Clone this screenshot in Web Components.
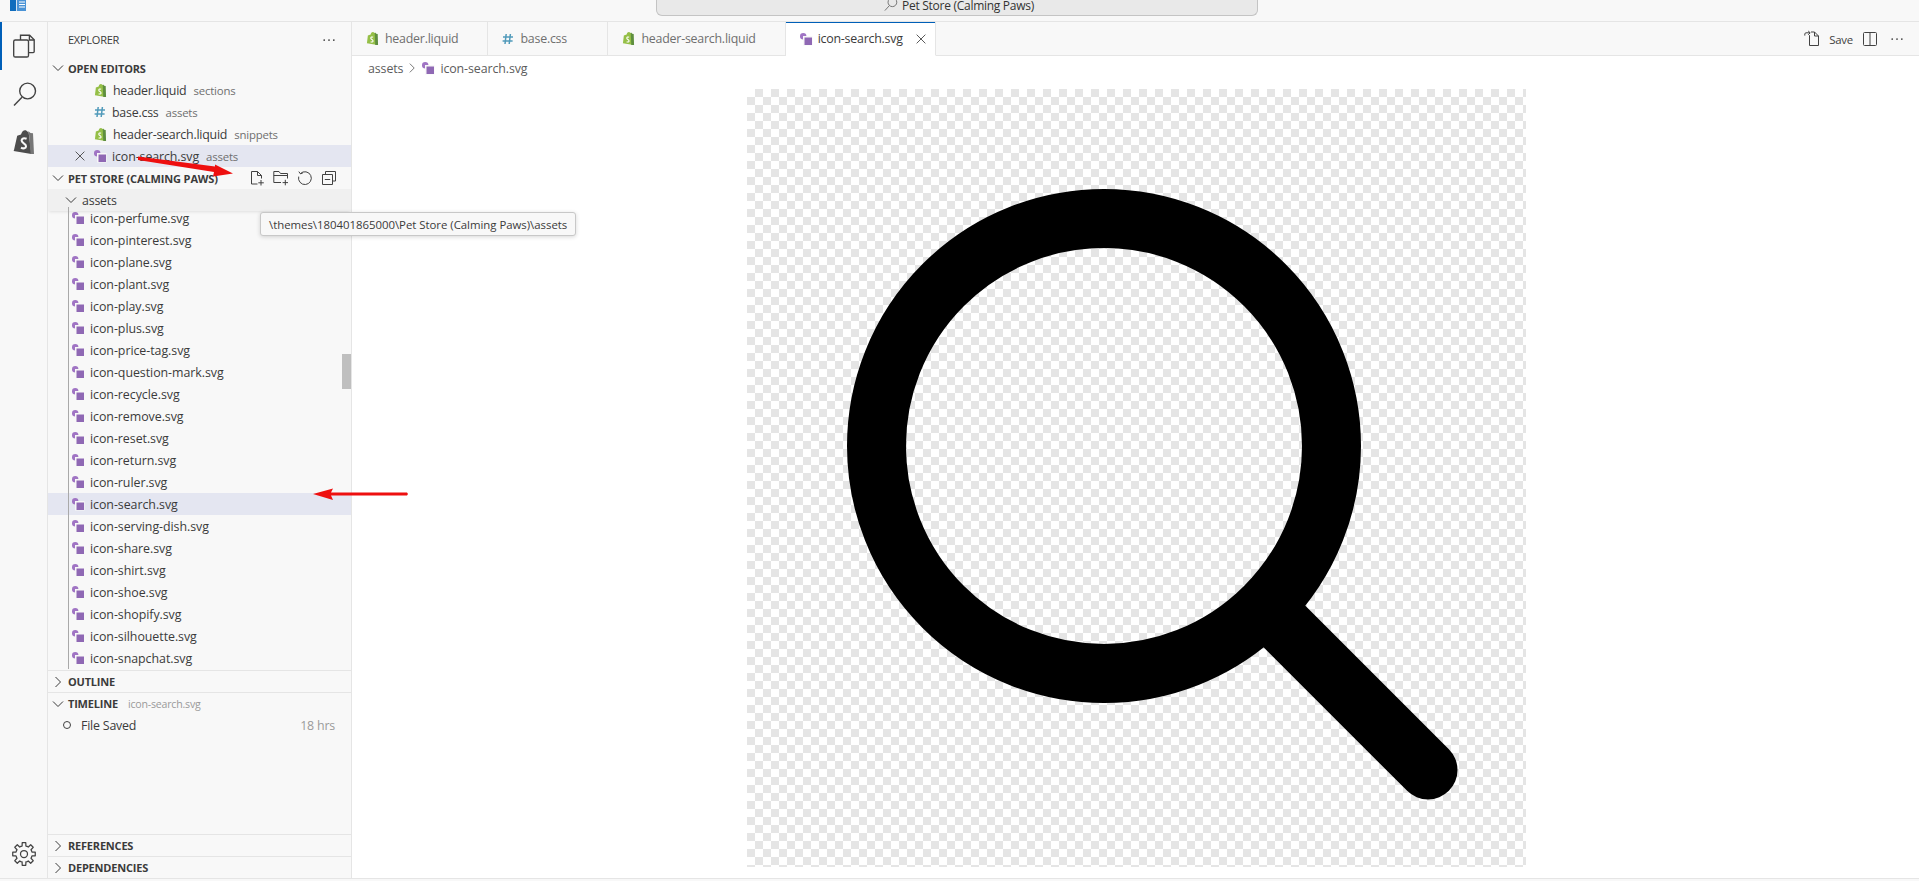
<!DOCTYPE html>
<html lang="en">
<head>
  <meta charset="UTF-8">
  <title>Pet Store (Calming Paws)</title>
  <style>
    html, body { margin: 0; height: 100%; overflow: hidden; background: #f8f8f8; }
    body { font-family: "Open Sans", "Noto Sans", sans-serif; font-size: 12px; color: #3b3b3b; }
  </style>
</head>
<body>

  <vs-app>
    <vs-titlebar slot="top">Pet Store (Calming Paws)</vs-titlebar>
    <vs-activitybar slot="left"></vs-activitybar>
    <vs-explorer slot="side"></vs-explorer>
    <vs-editor slot="main"></vs-editor>
    <vs-tooltip slot="over">\themes\180401865000\Pet Store (Calming Paws)\assets</vs-tooltip>
    <vs-arrows slot="over"></vs-arrows>
  </vs-app>

  <script>
    const INK = '#424242';

    function gearPath(cx, cy, outer, inner, teeth) {
      let d = '';
      const step = Math.PI * 2 / teeth;
      for (let i = 0; i < teeth; i++) {
        const a = i * step - Math.PI / 2;
        const pts = [
          [inner, a - step * 0.5], [inner, a - step * 0.3],
          [outer, a - step * 0.2], [outer, a + step * 0.2],
          [inner, a + step * 0.3]
        ];
        pts.forEach(([r, t], j) => {
          d += (i === 0 && j === 0 ? 'M' : 'L') + (cx + r * Math.cos(t)).toFixed(2) + ' ' + (cy + r * Math.sin(t)).toFixed(2);
        });
      }
      return d + 'Z';
    }

    const line = (d, w = 1) => `<path d="${d}" fill="none" stroke="currentColor" stroke-width="${w}"/>`;

    // name: [viewBox size, markup]
    const ICONS = {
      svg: [12, `<circle cx="3.2" cy="3.2" r="3.2" fill="#a074c4"/><rect x="3" y="3" width="9.5" height="9.5" fill="#f8f8f8"/><rect x="4.5" y="4.5" width="7.5" height="7.5" fill="#8f68b4"/>`],
      shopify: [14, `<path d="M2 3.8 5 2.6C5.5 .9 6.4 0 7.4 0c.8 0 1.2.4 1.5 1L10 .8 12.4 14 1 12.2Z" fill="#95bf47"/><path d="M9.4 .9 10 .8l1 1.1 1.6.3L13 14l-3-.1Z" fill="#5e8e3e"/><path d="M7.7 5.6C6.4 5 5.2 5.5 5.2 6.6c0 1.4 2.4 1.5 2.4 3 0 1.2-1.4 1.5-2.6.8" fill="none" stroke="#fff" stroke-width="1.2"/>`],
      hash: [12, `<path d="M4.2 1 3 11M8.4 1 7.2 11M1 4h10M.6 8h10" fill="none" stroke="#519aba" stroke-width="1.5"/>`],
      down: [16, line('M3 5.5 8 10.5 13 5.5')],
      right: [16, line('M5.5 3 10.5 8 5.5 13')],
      close: [16, line('M3 3 13 13M13 3 3 13')],
      dots: [16, `<circle cx="2.5" cy="8" r="1" fill="currentColor"/><circle cx="8" cy="8" r="1" fill="currentColor"/><circle cx="13.5" cy="8" r="1" fill="currentColor"/>`],
      newfile: [16, line('M8.5 14H2.5V1.5H8.5L12.5 5.5V8.5M8.5 1.5V5.5H12.5M12 10V15.5M9.3 12.8H14.8')],
      newfolder: [16, line('M8 12.5H.8V1.5H6L7.5 3.5H14.5V8.5M.8 5.5H14.5M12.3 9.8V15.3M9.6 12.6H15')],
      refresh: [16, line('M3.4 3.6A6.4 6.4 0 1 1 1.7 6.6M1.8 1.6 3.4 3.8 5.8 3')],
      collapse: [16, line('M4.5 4V1.5H14.5V11H12M1.5 4.5H11.5V14.5H1.5ZM3.8 9.5H9.2')],
      files: [24, `<g fill="none" stroke="currentColor" stroke-width="1.35"><path d="M7.5 6V1.2H16.6L21.2 5.8V17.6C21.2 18.2 20.8 18.6 20.2 18.6H15.5"/><path d="M16.4 1.2V6H21.2"/><rect x=".7" y="6" width="14.8" height="17" rx="1.6"/></g>`],
      search: [24, line('M9 15.2 1 23.4', 1.4) + `<circle cx="14.6" cy="9" r="7.9" fill="none" stroke="currentColor" stroke-width="1.4"/>`],
      shopbag: [24, `<path d="M1 20 4.2 5.8 8 4.6C8.8 1.6 10.4.2 12 .2c1.2 0 2 .6 2.5 1.6l1-.3L18.4 24 .6 21Z" fill="#4d4d4d"/><path d="M15.8 1.4 17.5 3 20 3.3 21 24 17.6 24Z" fill="#777"/><path d="M13.6 8.8C10.8 7.6 8.6 8.6 8.6 10.6c0 2.6 4.4 2.8 4.4 5.6 0 2.2-2.6 2.8-5 1.4" fill="none" stroke="#f8f8f8" stroke-width="2.1"/>`],
      gear: [24, `<path d="${gearPath(12, 12, 11.4, 8.2, 8)}" fill="none" stroke="currentColor" stroke-width="1.25" stroke-linejoin="round"/><circle cx="12" cy="12" r="3.5" fill="none" stroke="currentColor" stroke-width="1.25"/>`],
      changes: [16, line('M5.5 4.2V14.5H14.5V5L10.5 1H7M10.5 1V5H14.5M.8 4.6V3C.8 2.3 1.4 1.8 2 1.8H6M4.2 0 6.2 1.8 4.2 3.8')],
      split: [16, `<rect x="1.5" y="1.5" width="13" height="13" rx="1" fill="none" stroke="currentColor"/><path d="M8 1.5V14.5" stroke="currentColor"/>`],
      glass: [16, line('M6 10 1 15.5', 1) + `<circle cx="9.6" cy="6" r="5" fill="none" stroke="currentColor"/>`]
    };

    class VsIcon extends HTMLElement {
      connectedCallback() {
        const [box, markup] = ICONS[this.getAttribute('name')];
        const size = this.getAttribute('size') || box;
        this.attachShadow({ mode: 'open' });
        this.shadowRoot.innerHTML = `
          <style>
            :host { display: inline-flex; flex: none; width: ${size}px; height: ${size}px; }
            svg { display: block; overflow: visible; }
          </style>
          <svg width="${size}" height="${size}" viewBox="0 0 ${box} ${box}">${markup}</svg>`;
      }
    }
    customElements.define('vs-icon', VsIcon);

    class VsApp extends HTMLElement {
      constructor() {
        super();
        this.attachShadow({ mode: 'open' }).innerHTML = `
          <style>
            :host { display: flex; flex-direction: column; position: relative; width: 1919px; height: 881px; overflow: hidden; }
            .mid { display: flex; height: 856px; border-bottom: 1px solid #e5e5e5; }
            ::slotted([slot=main]) { flex: 1; min-width: 0; }
          </style>
          <slot name="top"></slot>
          <div class="mid"><slot name="left"></slot><slot name="side"></slot><slot name="main"></slot></div>
          <slot name="over"></slot>`;
      }
    }
    customElements.define('vs-app', VsApp);

    class VsTitlebar extends HTMLElement {
      constructor() {
        super();
        this.attachShadow({ mode: 'open' }).innerHTML = `
          <style>
            :host { display: flex; height: 22px; box-sizing: border-box; padding-left: 10px; background: #f8f8f8; border-bottom: 1px solid #e5e5e5; position: relative; }
            .logo { width: 16px; height: 11px; flex: none; }
            .box { box-sizing: border-box; width: 602px; height: 16px; margin-left: 630px; background: #e9e9e9; border: 1px solid #c4c4c4; border-top: none; border-radius: 0 0 6px 6px;
                   display: flex; justify-content: center; align-items: flex-start; gap: 4px; color: #333; overflow: hidden; padding-left: 4px; }
            .box span { font-size: 12px; line-height: 12px; letter-spacing: -.28px; }
            vs-icon { position: relative; top: -3px; color: #666; }
          </style>
          <svg class="logo" viewBox="0 0 16 11"><rect width="6" height="11" fill="#0f6cbd"/><rect x="6.8" width="9.2" height="11" fill="#4a93d6"/><path d="M9 2H15M9 4.5H15M9 7H15" stroke="#fff" stroke-width="1"/></svg>
          <div class="box"><vs-icon name="glass" size="14"></vs-icon><span><slot></slot></span></div>`;
      }
    }
    customElements.define('vs-titlebar', VsTitlebar);

    class VsActivitybar extends HTMLElement {
      constructor() {
        super();
        this.attachShadow({ mode: 'open' }).innerHTML = `
          <style>
            :host { display: flex; flex-direction: column; flex: none; width: 47px; box-sizing: content-box; background: #f8f8f8; border-right: 1px solid #e5e5e5; color: ${INK}; }
            .item { height: 48px; display: flex; align-items: center; padding-left: 13px; box-sizing: border-box; }
            .item.on { box-shadow: inset 2px 0 0 #005fb8; }
            .fill { flex: 1; }
            .item.gear { padding-left: 12px; height: 48px; margin-bottom: 0; }
          </style>
          <div class="item on"><vs-icon name="files"></vs-icon></div>
          <div class="item"><vs-icon name="search"></vs-icon></div>
          <div class="item"><vs-icon name="shopbag"></vs-icon></div>
          <div class="fill"></div>
          <div class="item gear"><vs-icon name="gear"></vs-icon></div>`;
      }
    }
    customElements.define('vs-activitybar', VsActivitybar);

    // collapsible pane heading of the sidebar
    class VsPaneHeader extends HTMLElement {
      constructor() {
        super();
        const open = this.hasAttribute('open');
        this.attachShadow({ mode: 'open' }).innerHTML = `
          <style>
            :host { display: flex; align-items: center; box-sizing: border-box; height: 22px; padding-left: 2px; font-size: 11px; color: #3b3b3b; }
            :host([line]) { border-top: 1px solid #e5e5e5; }
            b { font-weight: 700; margin-left: 2px; letter-spacing: var(--head-track, -.2px); white-space: nowrap; }
            .end { margin-left: auto; display: flex; }
          </style>
          <vs-icon name="${open ? 'down' : 'right'}" size="16"></vs-icon>
          <b><slot></slot></b>
          <slot name="extra"></slot>
          <div class="end"><slot name="end"></slot></div>`;
      }
    }
    customElements.define('vs-pane-header', VsPaneHeader);

    // one row of the tree: indent, icon, name, optional description
    class VsFileRow extends HTMLElement {
      constructor() {
        super();
        const icon = this.getAttribute('icon') || 'svg';
        const desc = this.getAttribute('desc');
        const size = icon === 'hash' ? 12 : icon === 'shopify' ? 13 : 12;
        this.attachShadow({ mode: 'open' }).innerHTML = `
          <style>
            :host { display: flex; align-items: center; height: 22px; box-sizing: border-box; padding-left: var(--indent, 24px); font-size: 12.4px; letter-spacing: var(--track, -.23px); white-space: nowrap; color: #3b3b3b; }
            :host([selected]) { background: #e4e6f1; }
            .x { position: absolute; left: 25px; color: ${INK}; display: flex; }
            .name { margin-left: 6px; }
            .desc { margin-left: 7px; font-size: 11.4px; color: #6f6f6f; letter-spacing: -.18px; }
          </style>
          ${this.hasAttribute('selected') && desc ? '<span class="x"><vs-icon name="close" size="14"></vs-icon></span>' : ''}
          <vs-icon name="${icon}" size="${size}"></vs-icon>
          <span class="name"><slot></slot></span>
          ${desc ? `<span class="desc">${desc}</span>` : ''}`;
      }
    }
    customElements.define('vs-file-row', VsFileRow);

    class VsExplorer extends HTMLElement {
      constructor() {
        super();
        const assets = ['perfume','pinterest','plane','plant','play','plus','price-tag','question-mark','recycle','remove','reset','return','ruler','search','serving-dish','share','shirt','shoe','shopify','silhouette','snapchat'];
        const rows = assets.map(n => `<vs-file-row${n === 'search' ? ' selected' : ''}>icon-${n}.svg</vs-file-row>`).join('');
        this.attachShadow({ mode: 'open' }).innerHTML = `
          <style>
            :host { display: flex; flex-direction: column; flex: none; width: 303px; background: #f8f8f8; border-right: 1px solid #e5e5e5; position: relative; }
            .title { display: flex; align-items: center; justify-content: space-between; height: 35px; padding: 0 15px 0 20px; font-size: 11px; color: #3b3b3b; letter-spacing: -.25px; }
            .opened { position: relative; --indent: 46px; }
            .opened vs-file-row { position: relative; }
            .tree { flex: 1; min-height: 0; overflow: hidden; position: relative; }
            .folder { position: relative; z-index: 1; display: flex; align-items: center; gap: 3px; height: 22px; padding-left: 15px; background: #f0f0f0; font-size: 12.4px; letter-spacing: -.2px; box-shadow: 0 2px 3px -1px rgba(0,0,0,.1); }
            .list { margin-top: -4px; --indent: 24px; --track: -.05px; position: relative; }
            .list::before { content: ""; position: absolute; left: 20px; top: 0; bottom: 0; width: 1px; background: #a9a9a9; z-index: 1; }
            .thumb { position: absolute; right: 0; top: 165px; width: 9px; height: 35px; background: #bfbfbf; z-index: 2; }
            .acts { display: flex; gap: 8px; padding-right: 14px; color: ${INK}; }
            .timeline { height: 142px; flex: none; }
            .event { display: flex; align-items: center; height: 22px; padding: 0 16px 0 15px; font-size: 12.4px; letter-spacing: -.2px; }
            .event i { box-sizing: border-box; width: 8px; height: 8px; border: 1.5px solid #424242; border-radius: 50%; margin-right: 10px; }
            .event .when { margin-left: auto; color: #9a9a9a; }
            .file { font-size: 10.6px; color: #9a9a9a; margin-left: 10px; letter-spacing: -.2px; }
          </style>
          <div class="title"><span>EXPLORER</span><vs-icon name="dots" size="14"></vs-icon></div>
          <vs-pane-header open>OPEN EDITORS</vs-pane-header>
          <div class="opened">
            <vs-file-row icon="shopify" desc="sections">header.liquid</vs-file-row>
            <vs-file-row icon="hash" desc="assets">base.css</vs-file-row>
            <vs-file-row icon="shopify" desc="snippets">header-search.liquid</vs-file-row>
            <vs-file-row selected desc="assets" style="--track:-.1px">icon-search.svg</vs-file-row>
          </div>
          <vs-pane-header open style="--head-track:-.13px">PET STORE (CALMING PAWS)
            <div class="acts" slot="end">
              <vs-icon name="newfile" size="16"></vs-icon>
              <vs-icon name="newfolder" size="16"></vs-icon>
              <vs-icon name="refresh" size="16"></vs-icon>
              <vs-icon name="collapse" size="16"></vs-icon>
            </div>
          </vs-pane-header>
          <div class="tree">
            <div class="folder"><vs-icon name="down" size="16"></vs-icon><span>assets</span></div>
            <div class="list">${rows}</div>
            <div class="thumb"></div>
          </div>
          <vs-pane-header line>OUTLINE</vs-pane-header>
          <div class="timeline">
            <vs-pane-header line open>TIMELINE<span class="file" slot="extra">icon-search.svg</span></vs-pane-header>
            <div class="event"><i></i><span>File Saved</span><span class="when">18 hrs</span></div>
          </div>
          <vs-pane-header line>REFERENCES</vs-pane-header>
          <vs-pane-header line>DEPENDENCIES</vs-pane-header>`;
      }
    }
    customElements.define('vs-explorer', VsExplorer);

    class VsTab extends HTMLElement {
      constructor() {
        super();
        const active = this.hasAttribute('active');
        this.attachShadow({ mode: 'open' }).innerHTML = `
          <style>
            :host { display: flex; align-items: center; box-sizing: border-box; height: 34px; min-width: 120px; padding: 0 ${active ? 7 : 29}px 0 14px; gap: 6px; background: #f8f8f8; border-right: 1px solid #e5e5e5; border-bottom: 1px solid #e5e5e5; font-size: 12.4px; letter-spacing: -.23px; color: #6f6f6f; white-space: nowrap; }
            :host([active]) { background: #fff; color: #3b3b3b; border-bottom-color: #fff; box-shadow: inset 0 1px 0 #005fb8; }
            .x { margin-left: 5px; color: ${INK}; display: flex; }
          </style>
          <vs-icon name="${this.getAttribute('icon') || 'svg'}" size="${this.getAttribute('icon') === 'shopify' ? 13 : 12}"></vs-icon>
          <span><slot></slot></span>
          ${active ? '<span class="x"><vs-icon name="close" size="14"></vs-icon></span>' : ''}`;
      }
    }
    customElements.define('vs-tab', VsTab);

    // checkerboard with the svg being previewed
    class VsPreview extends HTMLElement {
      constructor() {
        super();
        this.attachShadow({ mode: 'open' }).innerHTML = `
          <style>
            :host { display: block; width: 779px; height: 778px; background-color: #fff; background-image: conic-gradient(#e5e5e5 25%, #fff 0 50%, #e5e5e5 0 75%, #fff 0); background-size: 16px 16px; }
            svg { display: block; }
          </style>
          <svg width="779" height="778" viewBox="0 0 779 778">
            <circle cx="357" cy="357" r="227.5" fill="none" stroke="#000" stroke-width="59"/>
            <path d="M520 520 681 681" fill="none" stroke="#000" stroke-width="59" stroke-linecap="round"/>
          </svg>`;
      }
    }
    customElements.define('vs-preview', VsPreview);

    class VsEditor extends HTMLElement {
      constructor() {
        super();
        this.attachShadow({ mode: 'open' }).innerHTML = `
          <style>
            :host { display: flex; flex-direction: column; background: #fff; }
            .tabs { display: flex; height: 34px; background: #f8f8f8; box-shadow: inset 0 -1px 0 #e5e5e5; flex: none; }
            .acts { margin-left: auto; display: flex; align-items: center; color: ${INK}; padding-right: 15px; font-size: 11.4px; letter-spacing: -.2px; }
            .acts span { margin: 0 9px 0 9px; }
            .acts vs-icon[name=dots] { margin-left: 12px; }
            .crumbs { display: flex; align-items: center; box-sizing: border-box; height: 22px; flex: none; padding: 2px 0 0 16px; font-size: 12.4px; letter-spacing: -.1px; color: #5c5c5c; }
            .crumbs .sep { margin: 0 3px 0 2px; color: #666; display: flex; }
            .crumbs .name { margin-left: 6px; }
            .view { flex: 1; display: flex; justify-content: center; align-items: center; padding-left: 2px; min-height: 0; }
          </style>
          <div class="tabs">
            <vs-tab icon="shopify">header.liquid</vs-tab>
            <vs-tab icon="hash">base.css</vs-tab>
            <vs-tab icon="shopify">header-search.liquid</vs-tab>
            <vs-tab active>icon-search.svg</vs-tab>
            <div class="acts">
              <vs-icon name="changes" size="16"></vs-icon><span>Save</span>
              <vs-icon name="split" size="16"></vs-icon>
              <vs-icon name="dots" size="14"></vs-icon>
            </div>
          </div>
          <div class="crumbs">
            <span>assets</span><span class="sep"><vs-icon name="right" size="14"></vs-icon></span>
            <vs-icon name="svg" size="12"></vs-icon><span class="name">icon-search.svg</span>
          </div>
          <div class="view"><vs-preview></vs-preview></div>`;
      }
    }
    customElements.define('vs-editor', VsEditor);

    class VsTooltip extends HTMLElement {
      constructor() {
        super();
        this.attachShadow({ mode: 'open' }).innerHTML = `
          <style>
            :host { position: absolute; left: 260px; top: 212px; z-index: 5; box-sizing: border-box; height: 24px; display: flex; align-items: center; padding: 0 8px; background: #f8f8f8; border: 1px solid #c8c8c8; border-radius: 3px; box-shadow: 0 1px 4px rgba(0,0,0,.16); font-size: 11.4px; letter-spacing: -.02px; color: #3b3b3b; white-space: nowrap; }
          </style>
          <slot></slot>`;
      }
    }
    customElements.define('vs-tooltip', VsTooltip);

    // the two red marks someone drew on top of the screenshot
    class VsArrows extends HTMLElement {
      constructor() {
        super();
        this.attachShadow({ mode: 'open' }).innerHTML = `
          <style>
            :host { position: absolute; inset: 0; z-index: 6; pointer-events: none; }
            svg { display: block; }
          </style>
          <svg width="1919" height="881" viewBox="0 0 1919 881" fill="#ee0f0f">
            <polygon points="138,156.5 215,166.5 215,164.5 233,173.5 213,176.5 214,172 138,160"/>
            <polygon points="313,494 333,488.5 331,492.5 407,492.5 408,494 407,495.5 331,495.5 333,500"/>
          </svg>`;
      }
    }
    customElements.define('vs-arrows', VsArrows);
  </script>

</body>
</html>
